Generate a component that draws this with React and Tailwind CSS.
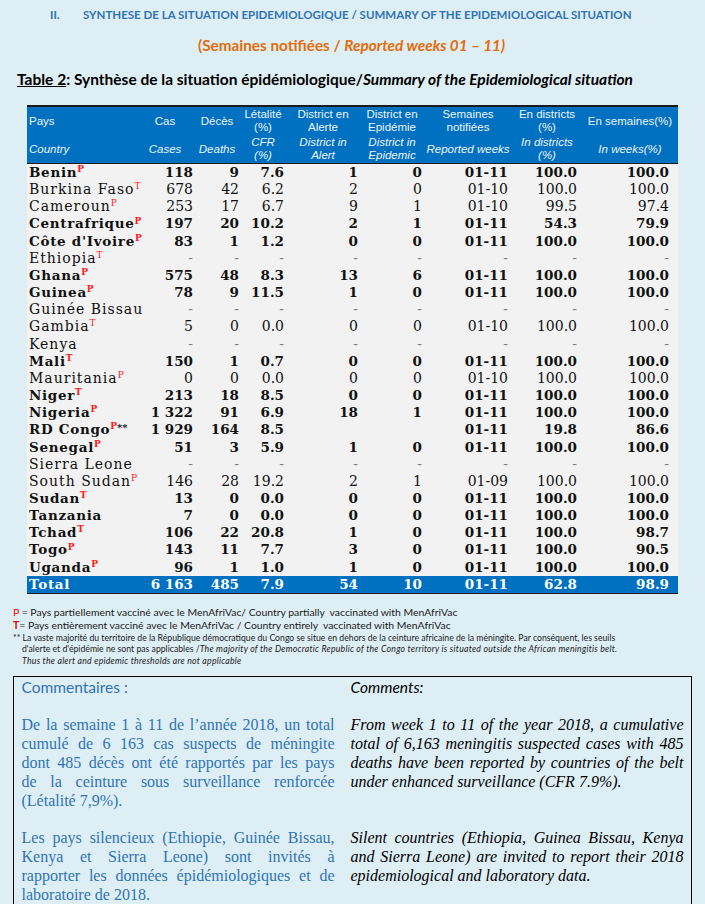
import React from 'react';

const narrow = "font-['Lato','DejaVu_Sans_Condensed',sans-serif]";
const cols = 'grid grid-cols-[109px_58px_46px_46px_74px_64px_88px_70px_96px]';
const pads = ['pl-[2px] text-left', 'pr-[1px]', 'pr-[1px]', 'pr-[2px]', 'pr-[2px]', 'pr-[2px]', 'pr-[4px]', 'pr-[5px]', 'pr-[9px]'];

const D = ['-', '-', '-', '-', '-', '-', '-', '-'];

// name, mark, bold, values
const rows = [
  ['Benin', 'P', true, ['118', '9', '7.6', '1', '0', '01-11', '100.0', '100.0']],
  ['Burkina Faso', 'T', false, ['678', '42', '6.2', '2', '0', '01-10', '100.0', '100.0']],
  ['Cameroun', 'P', false, ['253', '17', '6.7', '9', '1', '01-10', '99.5', '97.4']],
  ['Centrafrique', 'P', true, ['197', '20', '10.2', '2', '1', '01-11', '54.3', '79.9']],
  ["Côte d'Ivoire", 'P', true, ['83', '1', '1.2', '0', '0', '01-11', '100.0', '100.0']],
  ['Ethiopia', 'T', false, D],
  ['Ghana', 'P', true, ['575', '48', '8.3', '13', '6', '01-11', '100.0', '100.0']],
  ['Guinea', 'P', true, ['78', '9', '11.5', '1', '0', '01-11', '100.0', '100.0']],
  ['Guinée Bissau', '', false, D],
  ['Gambia', 'T', false, ['5', '0', '0.0', '0', '0', '01-10', '100.0', '100.0']],
  ['Kenya', '', false, D],
  ['Mali', 'T', true, ['150', '1', '0.7', '0', '0', '01-11', '100.0', '100.0']],
  ['Mauritania', 'P', false, ['0', '0', '0.0', '0', '0', '01-10', '100.0', '100.0']],
  ['Niger', 'T', true, ['213', '18', '8.5', '0', '0', '01-11', '100.0', '100.0']],
  ['Nigeria', 'P', true, ['1 322', '91', '6.9', '18', '1', '01-11', '100.0', '100.0']],
  ['RD Congo', 'P', true, ['1 929', '164', '8.5', '', '', '01-11', '19.8', '86.6'], '**'],
  ['Senegal', 'P', true, ['51', '3', '5.9', '1', '0', '01-11', '100.0', '100.0']],
  ['Sierra Leone', '', false, D],
  ['South Sudan', 'P', false, ['146', '28', '19.2', '2', '1', '01-09', '100.0', '100.0']],
  ['Sudan', 'T', true, ['13', '0', '0.0', '0', '0', '01-11', '100.0', '100.0']],
  ['Tanzania', '', true, ['7', '0', '0.0', '0', '0', '01-11', '100.0', '100.0']],
  ['Tchad', 'T', true, ['106', '22', '20.8', '1', '0', '01-11', '100.0', '98.7']],
  ['Togo', 'P', true, ['143', '11', '7.7', '3', '0', '01-11', '100.0', '90.5']],
  ['Uganda', 'P', true, ['96', '1', '1.0', '1', '0', '01-11', '100.0', '100.0']],
];

const headFr = ['Pays', 'Cas', 'Décès', ['Létalité', '(%)'], ['District en', 'Alerte'], ['District en', 'Epidémie'], ['Semaines', 'notifiées'], ['En districts', '(%)'], 'En semaines(%)'];
const headEn = ['Country', 'Cases', 'Deaths', ['CFR', '(%)'], ['District in', 'Alert'], ['District in', 'Epidemic'], 'Reported weeks', ['In districts', '(%)'], 'In weeks(%)'];

function HeadRow({ cells, italic }) {
  return (
    <div className={`${cols} h-[28px] ${italic ? 'italic' : ''}`}>
      {cells.map((c, i) => (
        <div key={i} className={`flex flex-col justify-center leading-[13px] ${i === 0 ? 'items-start pl-[2px]' : 'items-center text-center'}`}>
          {Array.isArray(c) ? c.map((l) => <span key={l}>{l}</span>) : <span>{c}</span>}
        </div>
      ))}
    </div>
  );
}

function Line({ children, last }) {
  return <div className={last ? 'text-left' : 'text-justify [text-align-last:justify]'}>{children}</div>;
}

export default function App() {
  return (
    <div className="w-[705px] min-h-screen bg-[#deeef5] text-black overflow-hidden">
      <div className={`${narrow} pt-[8px] leading-[14px] text-[11.5px] font-bold text-[#2e74b5] flex whitespace-nowrap`}>
        <span className="pl-[50px] w-[83px]">II.</span>
        <span>SYNTHESE DE LA SITUATION EPIDEMIOLOGIQUE / SUMMARY OF THE EPIDEMIOLOGICAL SITUATION</span>
      </div>
      <div className={`${narrow} mt-[14px] leading-[18px] text-[15.3px] font-bold text-[#e46c0a] text-center pr-[2px] whitespace-nowrap`}>
        (Semaines notifiées / <i>Reported weeks 01 – 11)</i>
      </div>
      <div className={`${narrow} mt-[15px] leading-[20px] text-[15.5px] font-bold pl-[17px] whitespace-nowrap`}>
        <span className="underline">Table 2</span>: Synthèse de la situation épidémiologique/<i>Summary of the Epidemiological situation</i>
      </div>

      <div className="mt-[16px] ml-[27px] w-[651px] border-t-2 border-b-[1.5px] border-[#1b1b1b]">
        <div className="bg-[#0070c0] text-[#eef4fb] text-[11.5px] font-['Liberation_Sans',Arial,sans-serif] border-b-[1px] border-[#1b1b1b]">
          <HeadRow cells={headFr} />
          <HeadRow cells={headEn} italic />
        </div>
        <div className="bg-[#f2f2f2] font-['DejaVu_Serif',serif] text-[#111]">
          {rows.map(([name, mark, bold, vals, extra]) => (
            <div key={name} className={`${cols} h-[17.17px] leading-[17.17px] whitespace-nowrap ${bold ? 'font-bold text-[13.5px]' : 'text-[14px]'}`}>
              <div className={`${pads[0]} ${bold ? 'tracking-[0.7px]' : 'tracking-[1px]'}`}>
                {name}
                {mark && <sup className="text-[9px] tracking-normal text-[#ff1a1a] top-[-0.55em]">{mark}</sup>}
                {extra && <sup className="text-[10px] tracking-normal top-[-0.3em]">{extra}</sup>}
              </div>
              {vals.map((v, i) => (
                <div key={i} className={`text-right ${pads[i + 1]} ${v === '-' ? 'font-normal text-[#7f7f7f]' : ''}`}>{v}</div>
              ))}
            </div>
          ))}
          <div className={`${cols} h-[17px] leading-[17px] bg-[#0070c0] text-white font-bold text-[13.5px] whitespace-nowrap`}>
            <div className={`${pads[0]} tracking-[0.7px]`}>Total</div>
            {['6 163', '485', '7.9', '54', '10', '01-11', '62.8', '98.9'].map((v, i) => (
              <div key={i} className={`text-right ${pads[i + 1]}`}>{v}</div>
            ))}
          </div>
        </div>
      </div>

      <div className={`${narrow} mt-[12px] pl-[13px] text-[10.4px] leading-[13px] text-[#1a1a1a] whitespace-nowrap`}>
        <div><span className="text-[#ff0000]">P</span> = Pays partiellement vacciné avec le MenAfriVac/ Country partially&nbsp; vaccinated with MenAfriVac</div>
        <div><span className="text-[#e00000] font-bold">T</span>= Pays entièrement vacciné avec le MenAfriVac / Country entirely&nbsp; vaccinated with MenAfriVac</div>
        <div className="text-[8.7px] leading-[11.5px]">
          <div>** La vaste majorité du territoire de la République démocratique du Congo se situe en dehors de la ceinture africaine de la méningite. Par conséquent, les seuils</div>
          <div className="pl-[9px]">d'alerte et d'épidémie ne sont pas applicables /<i className="tracking-[0.25px]">The majority of the Democratic Republic of the Congo territory is situated outside the African meningitis belt.</i></div>
          <div className="pl-[9px] italic tracking-[0.25px]">Thus the alert and epidemic thresholds are not applicable</div>
        </div>
      </div>

      <div className="mt-[10px] ml-[13px] w-[679px] border-[1.5px] border-black pl-[7.5px] pb-[20px]">
        <div className="grid grid-cols-[313px_333px] gap-x-[16px]">
          <div className={`${narrow} text-[15.5px] leading-[20px] text-[#2e74b5]`}>Commentaires :</div>
          <div className={`${narrow} text-[15.5px] leading-[20px] italic`}>Comments:</div>

          <div className="mt-[17.5px] font-['Liberation_Serif',serif] text-[16px] leading-[19px] text-[#2e74b5]">
            <Line>De la semaine 1 à 11 de l’année 2018, un total</Line>
            <Line>cumulé de 6 163 cas suspects de méningite</Line>
            <Line>dont 485 décès ont été rapportés par les pays</Line>
            <Line>de la ceinture sous surveillance renforcée</Line>
            <Line last>(Létalité 7,9%).</Line>
          </div>
          <div className="mt-[17.5px] font-['Liberation_Serif',serif] text-[16px] leading-[19px] italic">
            <Line>From week 1 to 11 of the year 2018, a cumulative</Line>
            <Line>total of 6,163 meningitis suspected cases with 485</Line>
            <Line>deaths have been reported by countries of the belt</Line>
            <Line last>under enhanced surveillance (CFR 7.9%).</Line>
          </div>

          <div className="mt-[18px] font-['Liberation_Serif',serif] text-[16px] leading-[19px] text-[#2e74b5]">
            <Line>Les pays silencieux (Ethiopie, Guinée Bissau,</Line>
            <Line>Kenya et Sierra Leone) sont invités à</Line>
            <Line>rapporter les données épidémiologiques et de</Line>
            <Line last>laboratoire de 2018.</Line>
          </div>
          <div className="mt-[18px] font-['Liberation_Serif',serif] text-[16px] leading-[19px] italic">
            <Line>Silent countries (Ethiopia, Guinea Bissau, Kenya</Line>
            <Line>and Sierra Leone) are invited to report their 2018</Line>
            <Line last>epidemiological and laboratory data.</Line>
          </div>
        </div>
      </div>
    </div>
  );
}
